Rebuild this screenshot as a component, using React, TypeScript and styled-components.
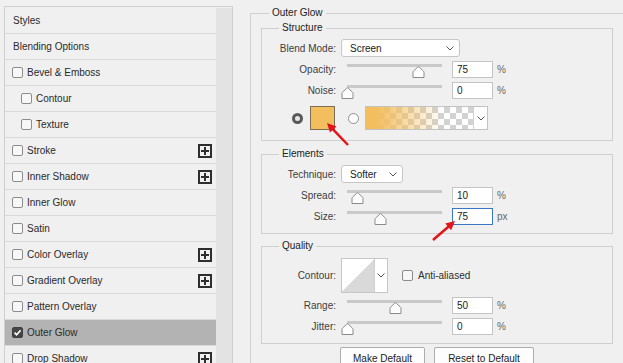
import React, { FC } from 'react';
import styled, { createGlobalStyle } from 'styled-components';

const GlobalStyle = createGlobalStyle`
  html, body {
    margin: 0;
    padding: 0;
    background: #f0f0f0;
  }
  body {
    font-family: "Liberation Sans", Arial, sans-serif;
    font-size: 10px;
    color: #2e2e2e;
    overflow: hidden;
  }
`;

type StyleItem = {
  label: string;
  heading?: boolean;
  indent?: boolean;
  plus?: boolean;
  active?: boolean;
};

const styleItems: StyleItem[] = [
  { label: 'Styles', heading: true },
  { label: 'Blending Options', heading: true },
  { label: 'Bevel & Emboss' },
  { label: 'Contour', indent: true },
  { label: 'Texture', indent: true },
  { label: 'Stroke', plus: true },
  { label: 'Inner Shadow', plus: true },
  { label: 'Inner Glow' },
  { label: 'Satin' },
  { label: 'Color Overlay', plus: true },
  { label: 'Gradient Overlay', plus: true },
  { label: 'Pattern Overlay' },
  { label: 'Outer Glow', active: true },
  { label: 'Drop Shadow', plus: true },
];

const Page = styled.div`
  position: relative;
  display: flex;
  align-items: flex-start;
  width: 623px;
  height: 363px;
  overflow: hidden;
`;

const StylesPanel = styled.div`
  display: flex;
  box-sizing: border-box;
  width: 229px;
  height: 370px;
  margin: 6px 0 0 4px;
  padding-top: 1px;
  border: 1px solid #d0d0d0;
  border-bottom: none;
`;

const StyleList = styled.div`
  width: 211px;
  display: flex;
  flex-direction: column;
`;

const ScrollTrack = styled.div`
  flex: 1;
  background: #e3e3e3;
`;

const StyleRow = styled.div<{ $indent: number; $active?: boolean }>`
  display: flex;
  align-items: center;
  gap: 4px;
  box-sizing: border-box;
  height: 26px;
  padding: 0 4px 0 ${(p) => p.$indent}px;
  border-bottom: 1px solid #d9d9d9;
  background: ${(p) => (p.$active ? '#b3b3b3' : 'transparent')};
  color: #2a2a2a;
`;

const Check = styled.span<{ $checked?: boolean }>`
  display: inline-flex;
  align-items: center;
  justify-content: center;
  box-sizing: border-box;
  width: 11px;
  height: 11px;
  border: 1px solid ${(p) => (p.$checked ? '#3f3f3f' : '#8c8c8c')};
  border-radius: 2px;
  background: ${(p) => (p.$checked ? '#454545' : '#f7f7f7')};
  flex-shrink: 0;
`;

const PlusBox = styled.span`
  position: relative;
  margin-left: auto;
  box-sizing: border-box;
  width: 14px;
  height: 14px;
  border: 2px solid #2e2e2e;

  &::before,
  &::after {
    content: '';
    position: absolute;
    background: #2e2e2e;
  }
  &::before {
    left: 1px;
    right: 1px;
    top: 4px;
    height: 2px;
  }
  &::after {
    top: 1px;
    bottom: 1px;
    left: 4px;
    width: 2px;
  }
`;

const Options = styled.div`
  flex: 1;
  min-width: 0;
  padding: 7px 0 0 17px;
`;

const OuterGroup = styled.fieldset`
  margin: 0;
  padding: 0;
  width: 400px;
  min-width: 0;
  box-sizing: border-box;
  border: 1px solid #cfcfcf;
`;

const Legend = styled.legend<{ $offset: number }>`
  margin-left: ${(p) => p.$offset}px;
  padding: 0 3px;
  line-height: 12px;
  color: #222;
`;

const OuterBody = styled.div`
  padding: 3px 0 0 10px;
`;

const Group = styled.fieldset<{ $gapTop?: number }>`
  margin: ${(p) => p.$gapTop ?? 0}px 0 0 0;
  padding: 0;
  width: 352px;
  min-width: 0;
  box-sizing: border-box;
  border: 1px solid #cfcfcf;
`;

const GroupBody = styled.div<{ $top: number; $bottom: number }>`
  display: flex;
  flex-direction: column;
  gap: 4px;
  padding: ${(p) => p.$top}px 0 ${(p) => p.$bottom}px 0;
`;

const Row = styled.div`
  display: grid;
  grid-template-columns: 74px 1fr;
  column-gap: 5px;
  align-items: center;
`;

const Label = styled.span`
  text-align: right;
  color: #3d3d3d;
`;

const Field = styled.div`
  display: flex;
  align-items: center;
`;

const Select = styled.div<{ $width: number }>`
  display: flex;
  align-items: center;
  justify-content: space-between;
  box-sizing: border-box;
  width: ${(p) => p.$width}px;
  height: 18px;
  padding: 0 5px 0 8px;
  border: 1px solid #c6c6c6;
  border-radius: 3px;
  background: #fff;
  color: #222;
`;

const SliderBox = styled.div`
  position: relative;
  width: 95px;
  height: 17px;
  margin-left: 6px;
`;

const Track = styled.div`
  margin-top: 3px;
  height: 3px;
  background: #c9c9c9;
`;

const Thumb = styled.svg`
  position: absolute;
  top: 5px;
  width: 13px;
  height: 12px;
`;

const NumberBox = styled.div<{ $focused?: boolean }>`
  box-sizing: border-box;
  width: 41px;
  height: 17px;
  margin-left: 10px;
  padding-left: 4px;
  line-height: 15px;
  border: 1px solid ${(p) => (p.$focused ? '#3b76c4' : '#c4c4c4')};
  background: #fff;
  color: #222;
`;

const Unit = styled.span`
  margin-left: 4px;
  color: #666;
`;

const ColorRow = styled.div`
  display: flex;
  align-items: center;
  margin-top: 3px;
  padding-left: 30px;
`;

const Radio = styled.span<{ $on?: boolean; $gap?: number }>`
  box-sizing: border-box;
  width: 11px;
  height: 11px;
  margin-left: ${(p) => p.$gap ?? 0}px;
  border-radius: 50%;
  border: ${(p) => (p.$on ? '3px solid #595959' : '1px solid #8e8e8e')};
  background: ${(p) => (p.$on ? '#e8e8e8' : '#fff')};
  flex-shrink: 0;
`;

const Swatch = styled.span`
  box-sizing: border-box;
  width: 25px;
  height: 24px;
  margin-left: 7px;
  border: 1px solid #7c6d56;
  background: #f3be5e;
`;

const GradientPicker = styled.div`
  display: flex;
  box-sizing: border-box;
  width: 123px;
  height: 24px;
  margin-left: 6px;
  border: 1px solid #c3c3c3;
  background: #fff;
`;

const GradientStrip = styled.div`
  flex: 1;
  background:
    linear-gradient(to right, #f3be5e 0%, #f3be5e 10%, rgba(243, 190, 94, 0) 72%),
    repeating-conic-gradient(#d2d2d2 0% 25%, #ffffff 0% 50%) 0 0 / 12px 12px;
`;

const DropCell = styled.div`
  display: flex;
  align-items: center;
  justify-content: center;
  width: 13px;
  border-left: 1px solid #d0d0d0;
`;

const ContourPicker = styled.div`
  display: flex;
  box-sizing: border-box;
  width: 47px;
  height: 35px;
  border: 1px solid #c6c6c6;
  background: #fff;
`;

const ContourPreview = styled.div`
  width: 35px;
  background: linear-gradient(to bottom right, #ffffff 50%, #d9d9d9 50%);
`;

const CheckLabel = styled.label`
  display: flex;
  align-items: center;
  gap: 5px;
  margin-left: 14px;
  color: #2e2e2e;
`;

const ButtonRow = styled.div`
  display: flex;
  justify-content: center;
  gap: 9px;
  width: 352px;
  margin-top: 3px;
`;

const Button = styled.button<{ $width: number }>`
  box-sizing: border-box;
  width: ${(p) => p.$width}px;
  height: 22px;
  padding: 0;
  border: 1px solid #adadad;
  border-radius: 2px;
  background: #fdfdfd;
  font: inherit;
  color: #222;
`;

const Overlay = styled.svg`
  position: absolute;
  left: 0;
  top: 0;
  width: 623px;
  height: 363px;
  pointer-events: none;
`;

const Chevron: FC = () => (
  <svg width="8" height="5" viewBox="0 0 8 5">
    <path d="M0.5 0.5 L4 4 L7.5 0.5" fill="none" stroke="#555" strokeWidth="1" />
  </svg>
);

const Tick: FC = () => (
  <svg width="9" height="9" viewBox="0 0 9 9">
    <path d="M1.5 4.6 L3.6 6.7 L7.6 2.2" fill="none" stroke="#fff" strokeWidth="1.7" />
  </svg>
);

type SliderRowProps = {
  label: string;
  value: string;
  pct: number;
  unit: string;
  focused?: boolean;
};

const SliderRow: FC<SliderRowProps> = ({ label, value, pct, unit, focused }) => (
  <Row>
    <Label>{label}</Label>
    <Field>
      <SliderBox>
        <Track />
        <Thumb viewBox="0 0 13 12" style={{ left: `calc(${pct}% - 6px)` }}>
          <path
            d="M1 11.5 L1 6.5 Q1 5.6 1.7 5 L5.7 1.2 Q6.5 0.5 7.3 1.2 L11.3 5 Q12 5.6 12 6.5 L12 11.5 Z"
            fill="#fff"
            stroke="#8a8a8a"
            strokeWidth="1"
          />
        </Thumb>
      </SliderBox>
      <NumberBox $focused={focused}>{value}</NumberBox>
      <Unit>{unit}</Unit>
    </Field>
  </Row>
);

const Arrow: FC<{ x1: number; y1: number; x2: number; y2: number }> = ({ x1, y1, x2, y2 }) => {
  const dx = x2 - x1;
  const dy = y2 - y1;
  const len = Math.hypot(dx, dy);
  const ux = dx / len;
  const uy = dy / len;
  const bx = x2 - ux * 9;
  const by = y2 - uy * 9;
  const head = `${x2},${y2} ${bx - uy * 4.5},${by + ux * 4.5} ${bx + uy * 4.5},${by - ux * 4.5}`;
  return (
    <g>
      <line x1={x1} y1={y1} x2={bx + ux} y2={by + uy} stroke="#e3151a" strokeWidth="2.5" />
      <polygon points={head} fill="#e3151a" />
    </g>
  );
};

const App: FC = () => (
  <Page>
    <GlobalStyle />
    <StylesPanel>
      <StyleList>
        {styleItems.map((item) => (
          <StyleRow
            key={item.label}
            $indent={item.heading ? 8 : item.indent ? 16 : 7}
            $active={item.active}
          >
            {!item.heading && <Check $checked={item.active}>{item.active && <Tick />}</Check>}
            {item.label}
            {item.plus && <PlusBox />}
          </StyleRow>
        ))}
      </StyleList>
      <ScrollTrack />
    </StylesPanel>

    <Options>
      <OuterGroup>
        <Legend $offset={18}>Outer Glow</Legend>
        <OuterBody>
          <Group>
            <Legend $offset={17}>Structure</Legend>
            <GroupBody $top={5} $bottom={10}>
              <Row>
                <Label>Blend Mode:</Label>
                <Select $width={119}>
                  Screen
                  <Chevron />
                </Select>
              </Row>
              <SliderRow label="Opacity:" value="75" pct={75} unit="%" />
              <SliderRow label="Noise:" value="0" pct={0} unit="%" />
              <ColorRow>
                <Radio $on />
                <Swatch />
                <Radio $gap={13} />
                <GradientPicker>
                  <GradientStrip />
                  <DropCell>
                    <Chevron />
                  </DropCell>
                </GradientPicker>
              </ColorRow>
            </GroupBody>
          </Group>

          <Group $gapTop={7}>
            <Legend $offset={17}>Elements</Legend>
            <GroupBody $top={5} $bottom={8}>
              <Row>
                <Label>Technique:</Label>
                <Select $width={62}>
                  Softer
                  <Chevron />
                </Select>
              </Row>
              <SliderRow label="Spread:" value="10" pct={10} unit="%" />
              <SliderRow label="Size:" value="75" pct={35} unit="px" focused />
            </GroupBody>
          </Group>

          <Group $gapTop={6}>
            <Legend $offset={17}>Quality</Legend>
            <GroupBody $top={6} $bottom={8}>
              <Row>
                <Label>Contour:</Label>
                <Field>
                  <ContourPicker>
                    <ContourPreview />
                    <DropCell>
                      <Chevron />
                    </DropCell>
                  </ContourPicker>
                  <CheckLabel>
                    <Check />
                    Anti-aliased
                  </CheckLabel>
                </Field>
              </Row>
              <SliderRow label="Range:" value="50" pct={50} unit="%" />
              <SliderRow label="Jitter:" value="0" pct={0} unit="%" />
            </GroupBody>
          </Group>

          <ButtonRow>
            <Button $width={85}>Make Default</Button>
            <Button $width={100}>Reset to Default</Button>
          </ButtonRow>
        </OuterBody>
      </OuterGroup>
    </Options>

    <Overlay viewBox="0 0 623 363">
      <Arrow x1={348} y1={145} x2={327} y2={123} />
      <Arrow x1={433} y1={240} x2={455} y2={221} />
    </Overlay>
  </Page>
);

export default App;
